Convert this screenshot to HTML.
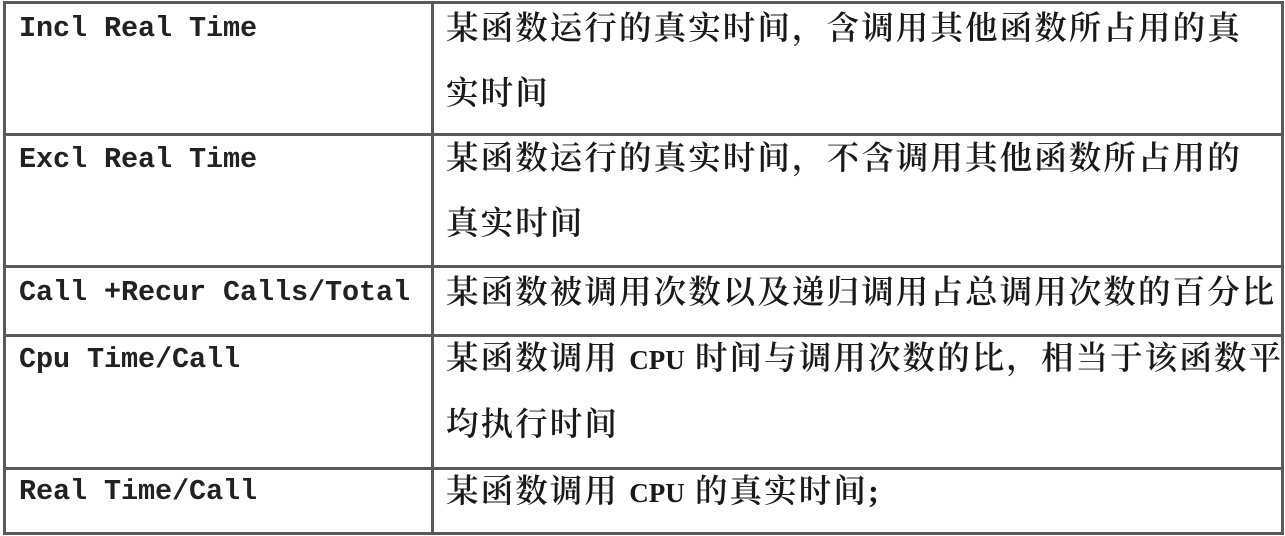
<!DOCTYPE html>
<html><head><meta charset="utf-8"><style>
body{margin:0;width:1285px;height:536px;background:#fff;position:relative;overflow:hidden}
.h{position:absolute;left:3px;width:1281px;height:3px;background:#5a5a5a}
.v{position:absolute;top:1px;width:3px;height:534px;background:#5a5a5a}
.l{position:absolute;left:19px;font:bold 28.5px "Liberation Mono",monospace;color:#222;line-height:32px;white-space:nowrap;letter-spacing:-0.1px}
.r{position:absolute;left:446px;font:600 32.5px "Liberation Serif","Noto Serif CJK SC",serif;color:#1a1a1a;line-height:65px;white-space:nowrap;letter-spacing:2.1px}
.r span{font-size:27px;letter-spacing:0}
</style></head><body>
<div class="h" style="top:1px"></div>
<div class="h" style="top:133px"></div>
<div class="h" style="top:265px"></div>
<div class="h" style="top:334px"></div>
<div class="h" style="top:467px"></div>
<div class="h" style="top:532px"></div>
<div class="v" style="left:3px"></div>
<div class="v" style="left:431px"></div>
<div class="v" style="left:1281px"></div>

<div class="l" style="top:13px">Incl Real Time</div>
<div class="l" style="top:144px">Excl Real Time</div>
<div class="l" style="top:277px">Call +Recur Calls/Total</div>
<div class="l" style="top:344px">Cpu Time/Call</div>
<div class="l" style="top:476px">Real Time/Call</div>

<div class="r" style="top:-3px">某函数运行的真实时间，含调用其他函数所占用的真<br>实时间</div>
<div class="r" style="top:127px">某函数运行的真实时间，不含调用其他函数所占用的<br>真实时间</div>
<div class="r" style="top:261px">某函数被调用次数以及递归调用占总调用次数的百分比</div>
<div class="r" style="top:327px">某函数调用 <span>CPU</span> 时间与调用次数的比，相当于该函数平<br>均执行时间</div>
<div class="r" style="top:460px">某函数调用 <span>CPU</span> 的真实时间;</div>
</body></html>
